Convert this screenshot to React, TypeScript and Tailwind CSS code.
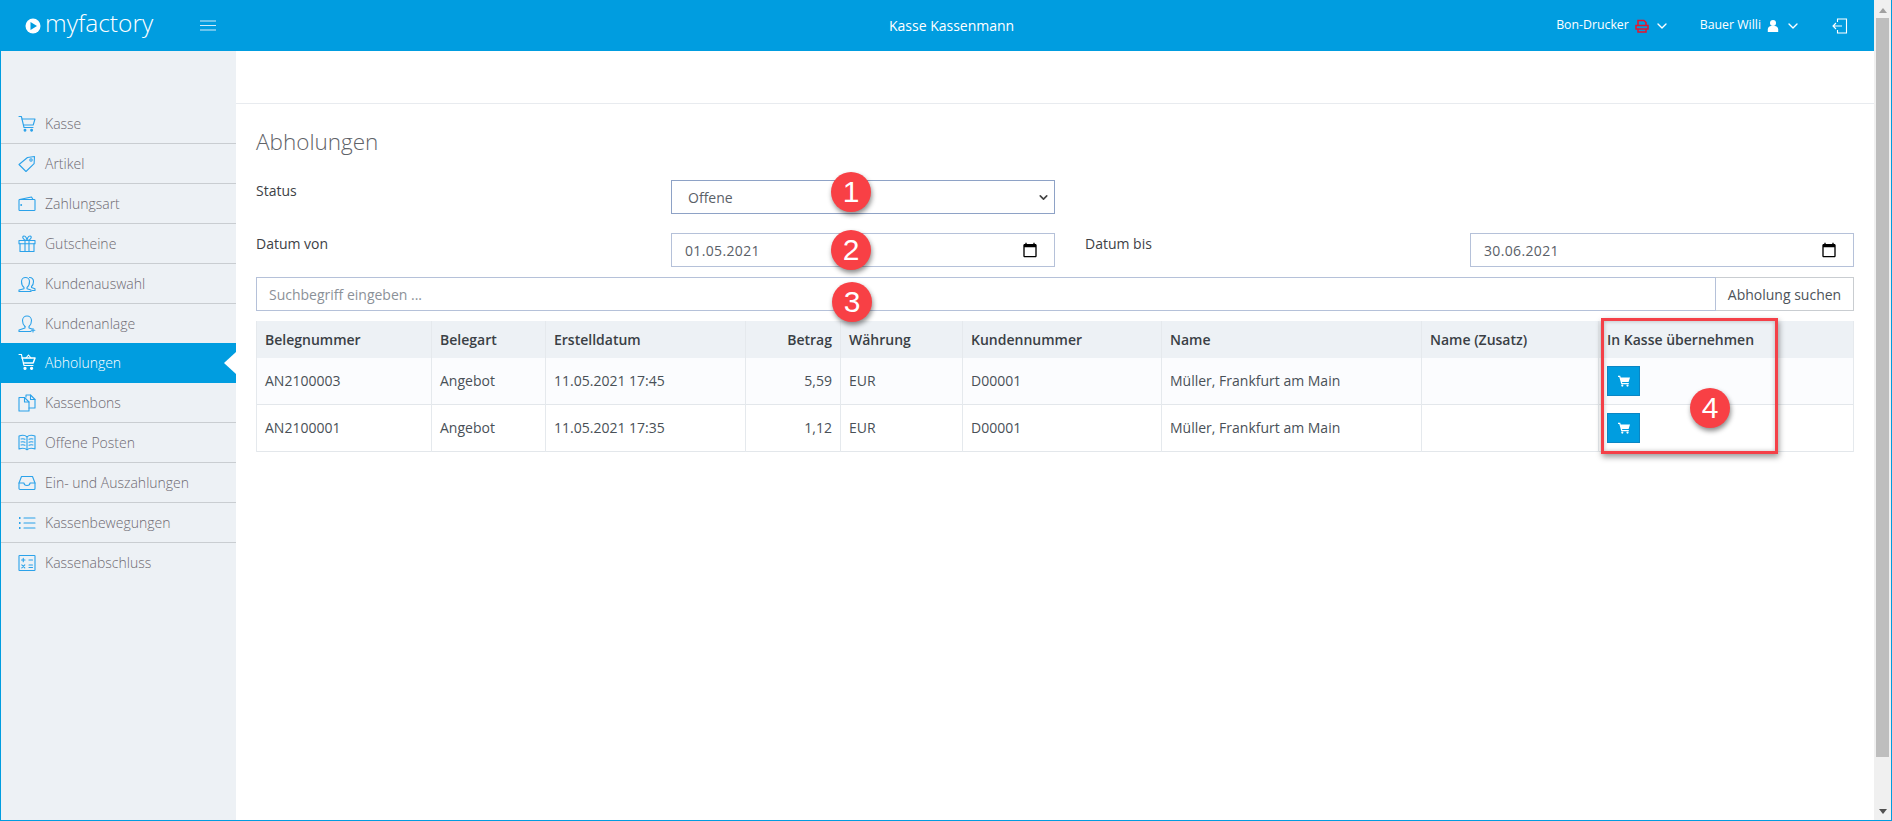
import React from "react";
import { ChevronDown } from "lucide-react";

const Ic = ({ children, cls = "text-[#2ba2ea]" }: { children: React.ReactNode; cls?: string }) => (
  <svg viewBox="0 0 18 18" width="18" height="18" fill="none" stroke="currentColor" strokeWidth="1.1" strokeLinecap="round" strokeLinejoin="round" className={`shrink-0 ${cls}`}>
    {children}
  </svg>
);

const cart = (
  <>
    <path d="M1 1.500h2.400l2.600 11h9" />
    <path d="M4 4H17l-1.800 6H5.500" />
    <circle cx="7" cy="15.300" r="0.9" fill="currentColor" />
    <circle cx="13.600" cy="15.300" r="0.9" fill="currentColor" />
  </>
);

const cartActive = (
  <>
    <path d="M1 1.500h2.400l2.600 11h9" />
    <path d="M4 5H17l-1.800 5H5.500" strokeWidth="1.500" />
    <path d="M8 5l2.500-3L13 5" />
    <circle cx="7" cy="15.300" r="1.100" fill="currentColor" />
    <circle cx="13.600" cy="15.300" r="1.100" fill="currentColor" />
  </>
);

const items: { label: string; icon: React.ReactNode; active?: boolean }[] = [
  { label: "Kasse", icon: cart },
  {
    label: "Artikel",
    icon: (
      <>
        <path d="M1 9.500 9.500 2.500l7-1-.4 7.200L8 16.500Z" />
        <circle cx="13" cy="5" r="1.200" />
      </>
    ),
  },
  {
    label: "Zahlungsart",
    icon: (
      <>
        <path d="M1.500 4.500 13.500 2l1.500 2.500" />
        <rect x="1" y="4.500" width="16" height="11" rx="0.8" />
        <circle cx="3.200" cy="10" r="0.4" fill="currentColor" />
      </>
    ),
  },
  {
    label: "Gutscheine",
    icon: (
      <>
        <rect x="1" y="5.500" width="16" height="3.200" />
        <path d="M2 8.700V16.500h14V8.700M7 5.500v11M11 5.500v11" />
        <path d="M9 5.500C5 5.500 3.500 1 6 1c2 0 3 3 3 4.500ZM9 5.500c4 0 5.500-4.500 3-4.500-2 0-3 3-3 4.500Z" />
      </>
    ),
  },
  {
    label: "Kundenauswahl",
    icon: (
      <>
        <path d="M6 12.500C4 11 3.500 9 3.500 6.500a4 4 0 0 1 8 0c0 2.500-.5 4.500-2.500 6v1.200l4 1.300v1.500H1v-1.500l5-1.300Z" />
        <path d="M11.500 2.500a3.700 3.700 0 0 1 4 4c0 2-.5 3.700-2 5v1l3.500 1.200v1.800h-3" />
      </>
    ),
  },
  {
    label: "Kundenanlage",
    icon: (
      <>
        <path d="M7 11.500C5.200 10 4.500 8 4.500 5.500a4.500 4.500 0 0 1 9 0c0 2.500-.7 4.500-2.500 6v1.500l3 1" />
        <path d="M7 11.500V13l-6 2v1.500h12" />
        <path d="M15 13.500v3.500M13.200 15.300h3.600" />
      </>
    ),
  },
  { label: "Abholungen", icon: cartActive, active: true },
  {
    label: "Kassenbons",
    icon: (
      <>
        <path d="M6.500 3.500H1v13.500h10V8Z" />
        <path d="M6.500 3.500V8H11" />
        <path d="M8 3V1h4.500L17 5.500V14h-6" />
        <path d="M12.500 1v4.500H17" />
      </>
    ),
  },
  {
    label: "Offene Posten",
    icon: (
      <>
        <path d="M1 2c3-1 6-1 8 .8C11 1 14 1 17 2v13c-3-1-6-1-8 .8C7 14 4 14 1 15Z" />
        <path d="M9 3v12.500M3 5c1.500-.3 3-.3 4 .2M3 8c1.500-.3 3-.3 4 .2M3 11c1.500-.3 3-.3 4 .2M11 5.200c1-.5 2.500-.5 4-.2M11 8.200c1-.5 2.500-.5 4-.2M11 11.200c1-.5 2.500-.5 4-.2" />
      </>
    ),
  },
  {
    label: "Ein- und Auszahlungen",
    icon: (
      <>
        <path d="M3.500 2.500h11L17 9v5.500a1 1 0 0 1-1 1H2a1 1 0 0 1-1-1V9Z" />
        <path d="M1 9h5c0 1.500 1.200 2.500 3 2.500s3-1 3-2.500h5" />
      </>
    ),
  },
  {
    label: "Kassenbewegungen",
    icon: (
      <>
        <path d="M6 4h11M6 9h11M6 14h11" />
        <path d="M1 4h1.500M1 9h1.500M1 14h1.500" strokeWidth="2" strokeLinecap="butt" />
      </>
    ),
  },
  {
    label: "Kassenabschluss",
    icon: (
      <>
        <rect x="1" y="1.500" width="16" height="15" rx="0.6" />
        <path d="M3.500 6h3.500M5.250 4.300v3.400M11 6h3.500M3.800 10.800l3 3M6.800 10.800l-3 3M11 11h3.500M11 13.500h3.500" />
      </>
    ),
  },
];

const Badge = ({ n, cls }: { n: number; cls: string }) => (
  <div className={`absolute w-10 h-10 rounded-full bg-[#f84045] text-white flex items-center justify-center text-[30px] leading-none shadow-[1px_3px_5px_rgba(0,0,0,0.45)] ${cls}`} style={{ fontFamily: '"Liberation Sans", sans-serif' }}>
    {n}
  </div>
);

const heads: { t: string; w: string; right?: boolean }[] = [
  { t: "Belegnummer", w: "w-[175px]" },
  { t: "Belegart", w: "w-[114px]" },
  { t: "Erstelldatum", w: "w-[200px]" },
  { t: "Betrag", w: "w-[95px]", right: true },
  { t: "Währung", w: "w-[122px]" },
  { t: "Kundennummer", w: "w-[199px]" },
  { t: "Name", w: "w-[260px]" },
  { t: "Name (Zusatz)", w: "w-[177px]" },
  { t: "In Kasse übernehmen", w: "" },
];

const rows = [
  ["AN2100003", "Angebot", "11.05.2021 17:45", "5,59", "EUR", "D00001", "Müller, Frankfurt am Main", ""],
  ["AN2100001", "Angebot", "11.05.2021 17:35", "1,12", "EUR", "D00001", "Müller, Frankfurt am Main", ""],
];

const SmallCart = () => (
  <svg viewBox="0 0 12 12" width="12" height="12" fill="#fff">
    <path d="M0 .8h2.200l.5 1.700H12L10.600 7H4l.3 1h6.500v1.200H3.300L1.300 2H0Z" />
    <circle cx="4.300" cy="10.600" r="1.100" />
    <circle cx="9.500" cy="10.600" r="1.100" />
  </svg>
);

const Calendar = () => (
  <svg viewBox="0 0 24 24" width="16" height="16" fill="#000" className="shrink-0">
    <path d="M20 3h-1V1h-2v2H7V1H5v2H4c-1.100 0-2 .9-2 2v16c0 1.100.9 2 2 2h16c1.100 0 2-.9 2-2V5c0-1.100-.9-2-2-2zm0 18H4V8h16v13z" />
  </svg>
);

export default function App() {
  return (
    <div className="relative h-[821px] w-[1892px] overflow-hidden bg-white flex border-l border-r border-b border-[#009de0] text-[#495057]" style={{ fontFamily: '"Open Sans", sans-serif' }}>
      <div className="flex-1 min-w-0 flex flex-col">
        <header className="h-[51px] shrink-0 bg-[#009de0] flex items-center text-white text-[12.3px]">
          <div className="w-[236px] pl-[24px] flex items-center shrink-0">
            <svg viewBox="0 0 16 16" width="16" height="16" className="shrink-0">
              <circle cx="8" cy="8" r="7.500" fill="#fff" />
              <path d="M5.500 4 12 8l-6.500 4Z" fill="#009de0" />
            </svg>
            <span className="ml-[4px] text-[24.5px] font-light leading-none -mt-[5px]">myfactory</span>
            <svg viewBox="0 0 16 10" width="16" height="11" className="ml-[47px] shrink-0" stroke="#d3ecf9" strokeWidth="1">
              <path d="M0 .5h16M0 5h16M0 9.500h16" />
            </svg>
          </div>
          <div className="flex-1 flex justify-center pl-[110px]">
            <span className="text-[14px]">Kasse Kassenmann</span>
          </div>
          <div className="flex items-center shrink-0 pr-[26px]">
            <span>Bon-Drucker</span>
            <svg viewBox="0 0 14 14" width="14" height="14" className="ml-[6px]" fill="none" stroke="#e8132c" strokeWidth="1.500">
              <path d="M3 6V1.500h6L11 3.500V6M1 6.500h12v3.500H1ZM3 10v3h8v-3" />
            </svg>
            <ChevronDown size={16} strokeWidth={2} className="ml-[5px]" />
            <span className="ml-[30px]">Bauer Willi</span>
            <svg viewBox="0 0 12 12" width="12" height="12" className="ml-[6px]" fill="#fff">
              <circle cx="6" cy="3" r="3" />
              <path d="M.8 12V9.500C.8 7.500 2.500 6 4 6h4c1.500 0 3.200 1.500 3.200 3.500V12Z" />
            </svg>
            <ChevronDown size={16} strokeWidth={2} className="ml-[6px]" />
            <svg viewBox="0 0 16 16" width="16" height="16" className="ml-[31px]" fill="none" stroke="#fff" strokeWidth="1.100">
              <path d="M5.500 4V1h9v14h-9v-3" />
              <path d="M1 8h9M4 5 1 8l3 3" />
            </svg>
          </div>
        </header>

        <div className="flex flex-1 min-h-0">
          <nav className="w-[235px] shrink-0 bg-[#edf1f5] pt-[53px] text-[14px]">
            {items.map((it) => (
              <div key={it.label} className={`relative h-10 flex items-center pl-[17px] ${it.active ? "bg-[#009de0] text-white -mt-px pb-[2px]" : "border-b border-[#c9cdd1] text-[#6e6a72]"} ${it.label === "Kassenabschluss" ? "border-b-0 pb-[1px]" : ""}`}>
                <Ic cls={it.active ? "text-white" : "text-[#2ba2ea]"}>{it.icon}</Ic>
                <span className="ml-[9px] font-light">{it.label}</span>
                {it.active && <span className="absolute right-0 top-[9px] w-0 h-0 border-y-[11px] border-y-transparent border-r-[12px] border-r-white" />}
              </div>
            ))}
          </nav>

          <main className="flex-1 min-w-0">
            <div className="h-[53px] border-b border-[#e8ebef]" />
            <div className="pl-[20px] pr-[20px]">
              <h1 className="text-[22.5px] font-light leading-[33px] mt-[21px] text-[#5f6368]">Abholungen</h1>

              <div className="flex mt-[22px] h-[34px]">
                <div className="w-[415px] text-[14px] text-[#3d4146] leading-[19px] mt-[1px]">Status</div>
                <div className="w-[384px] h-[34px] border border-[#8ea2c6] flex items-center justify-between pl-[16px] pr-[3px] text-[14px]">
                  <span className="text-[#5a6068]">Offene</span>
                  <ChevronDown size={13} strokeWidth={3} className="text-[#444] mr-[1px]" />
                </div>
              </div>

              <div className="flex mt-[19px] h-[34px]">
                <div className="w-[415px] text-[14px] text-[#3d4146] leading-[19px] mt-[1px]">Datum von</div>
                <div className="w-[384px] h-[34px] border border-[#b5c1d9] flex items-center justify-between pl-[13px] pr-[16px] text-[14px] tracking-[0.35px]">
                  <span className="text-[#5a6068]">01.05.2021</span>
                  <Calendar />
                </div>
                <div className="w-[415px] pl-[30px] text-[14px] text-[#3d4146] leading-[19px] mt-[1px]">Datum bis</div>
                <div className="w-[384px] h-[34px] border border-[#b5c1d9] flex items-center justify-between pl-[13px] pr-[16px] text-[14px] tracking-[0.35px]">
                  <span className="text-[#5a6068]">30.06.2021</span>
                  <Calendar />
                </div>
              </div>

              <div className="flex mt-[10px] h-[34px] text-[14px]">
                <div className="flex-1 pl-[12px] flex items-center text-[#8b9198] border border-[#b5c1d9]">Suchbegriff eingeben ...</div>
                <div className="w-[138px] border border-l-0 border-[#c9cdd1] flex items-center justify-center text-[#4d5359]">Abholung suchen</div>
              </div>

              <table className="mt-[10px] w-[1598px] table-fixed border-collapse text-[14px]">
                <thead>
                  <tr className="bg-[#edf1f5] h-[37px]">
                    {heads.map((h) => (
                      <th key={h.t} className={`${h.w} px-[8px] font-semibold border-x border-[#e5e9ed] text-[#3a3f45] ${h.right ? "text-right" : "text-left"}`}>{h.t}</th>
                    ))}
                  </tr>
                </thead>
                <tbody>
                  {rows.map((r, i) => (
                    <tr key={i} className={`border-b border-[#e3e7eb] ${i === 0 ? "bg-[#fbfcfe] h-[46px]" : "bg-white h-[47px]"}`}>
                      {r.map((c, j) => (
                        <td key={j} className={`px-[8px] border-x border-[#e5e9ed] ${j === 3 ? "text-right" : ""}`}>{c}</td>
                      ))}
                      <td className="px-[8px] border-x border-[#e5e9ed]">
                        <div className="w-[33px] h-[30px] bg-[#009de0] border border-[#0a86c4] flex items-center justify-center"><SmallCart /></div>
                      </td>
                    </tr>
                  ))}
                </tbody>
              </table>
            </div>
          </main>
        </div>
      </div>

      <div className="w-[17px] shrink-0 bg-[#f0f0f0] flex flex-col items-center">
        <span className="mt-[8px] w-0 h-0 border-x-[4px] border-x-transparent border-b-[5px] border-b-[#a0a0a0]" />
        <div className="mt-[5px] w-[13px] h-[739px] bg-[#bebebe]" />
        <span className="mt-[52px] w-0 h-0 border-x-[4px] border-x-transparent border-t-[5px] border-t-[#505050]" />
      </div>

      <div className="absolute left-[1600px] top-[318px] w-[177px] h-[136px] border-[3px] border-[#f44048] shadow-[1px_3px_6px_rgba(0,0,0,0.4),inset_0_0_4px_rgba(0,0,0,0.25)]" />
      <Badge n={1} cls="left-[830px] top-[172px]" />
      <Badge n={2} cls="left-[830px] top-[230px]" />
      <Badge n={3} cls="left-[831px] top-[282px]" />
      <Badge n={4} cls="left-[1689px] top-[388px]" />
    </div>
  );
}
